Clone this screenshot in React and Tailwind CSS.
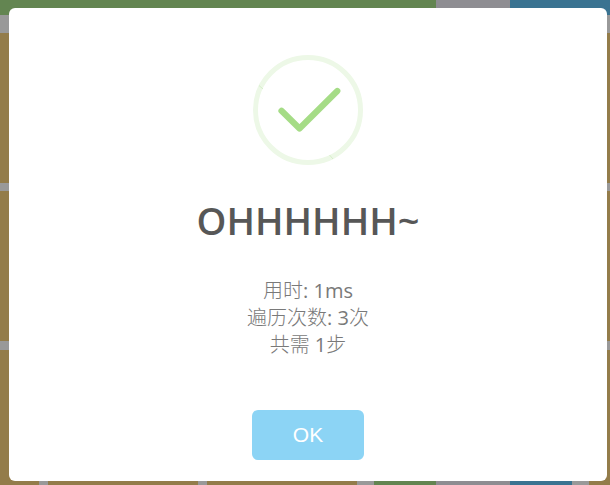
const results = [
  { label: "用时", value: "1", unit: "ms", latin: true },
  { label: "遍历次数", value: "3", unit: "次" },
];

function Latin({ children }) {
  return <span className="font-normal">{children}</span>;
}

function Tiles({ className }) {
  return (
    <div className={`flex gap-2 ${className}`}>
      <div className="w-[39px] bg-[#937c4a]" />
      <div className="w-[150px] bg-[#937c4a]" />
      <div className="w-[150px] bg-[#937c4a]" />
      <div className="flex-1 bg-[#937c4a]" />
    </div>
  );
}

function Board() {
  return (
    <div aria-hidden="true" className="flex min-h-screen flex-col bg-[#999999]">
      <div className="flex h-[15px]">
        <div className="flex-1 bg-[#638551]" />
        <div className="w-[74px] bg-[#8e8d92]" />
        <div className="w-[100px] bg-[#3a7391]" />
      </div>
      <Tiles className="mt-[18px] h-[150px]" />
      <Tiles className="mt-2 h-[150px]" />
      <div className="mt-[9px] flex flex-1">
        <div className="mr-[9px] w-[39px] bg-[#937c4a]" />
        <div className="mr-[9px] w-[150px] bg-[#937c4a]" />
        <div className="mr-[17px] w-[150px] bg-[#937c4a]" />
        <div className="w-[62px] bg-[#638551]" />
        <div className="w-[74px] bg-[#8e8d92]" />
        <div className="mr-[17px] w-[62px] bg-[#3a7391]" />
        <div className="flex-1 bg-[#937c4a]" />
      </div>
    </div>
  );
}

function SuccessIcon() {
  return (
    <svg className="size-[110px]" viewBox="0 0 110 110" fill="none" aria-hidden="true">
      <circle cx="55" cy="55" r="52.5" stroke="#edf8e7" strokeWidth="5" />
      <path d="M6 30.5l4 3.5M76.500 100l3.500 4" stroke="#c5e8b3" strokeWidth=".6" />
      <path
        d="M28.500 55.800L46.500 73.500L84.300 36"
        stroke="#a5dc86"
        strokeWidth="6.200"
        strokeLinecap="round"
        strokeLinejoin="round"
      />
    </svg>
  );
}

export default function App() {
  return (
    <div className="relative font-['Open_Sans','Noto_Sans_CJK_SC',sans-serif]">
      <Board />
      <div className="absolute inset-0 pt-2 pr-[3px] pl-[9px]">
        <div
          role="dialog"
          aria-modal="true"
          aria-labelledby="result-title"
          className="flex flex-col items-center rounded-md bg-white pt-[47px] pb-[21px]"
        >
          <SuccessIcon />
          <h2 id="result-title" className="mt-7 text-[38px] leading-[54px] font-semibold text-[#575757]">
            OHHHHHH~
          </h2>
          <div className="mt-[30px] text-center text-[20px] leading-[27px] font-light text-[#797979]">
            {results.map(({ label, value, unit, latin }) => (
              <p key={label}>
                {label}
                <Latin>: {value}</Latin>
                {latin ? <Latin>{unit}</Latin> : unit}
              </p>
            ))}
            <p>
              共需<Latin> 1</Latin>步
            </p>
          </div>
          <button
            type="button"
            className="mt-[52px] h-[50px] w-28 rounded-md bg-[#8cd4f5] font-['Liberation_Sans',sans-serif] text-[21px] text-white"
          >
            OK
          </button>
        </div>
      </div>
    </div>
  );
}
